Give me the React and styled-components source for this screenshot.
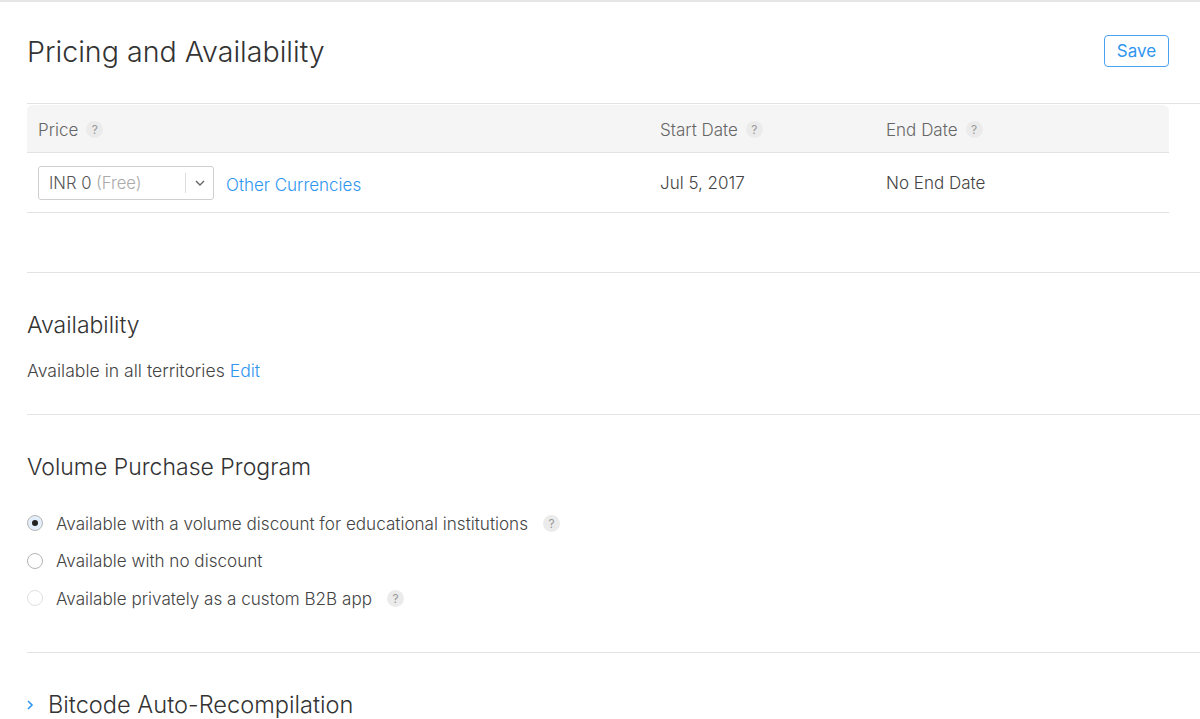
import styled, { createGlobalStyle } from "styled-components";

const GlobalStyle = createGlobalStyle`
  html, body {
    margin: 0;
    padding: 0;
    background: #fff;
    font-family: "Inter", "Liberation Sans", sans-serif;
    color: #444;
  }
`;

const Page = styled.div`
  border-top: 2px solid #e6e6e6;
  padding-left: 27px;
  overflow: hidden;
  height: 717px;
`;

const Header = styled.header`
  display: flex;
  align-items: center;
  justify-content: space-between;
  height: 101px;
  padding-right: 31px;
  box-sizing: border-box;
  padding-bottom: 2px;
`;

const Title = styled.h1`
  margin: 0;
  font-size: 28.6px;
  font-weight: 300;
  color: #333;
`;

const SaveButton = styled.button`
  font-family: inherit;
  width: 65px;
  height: 32px;
  border: 1px solid #4aa3f2;
  border-radius: 4px;
  background: #fff;
  color: #2f96f0;
  font-size: 17px;
  font-weight: 400;
  padding: 0;
  margin-top: -2px;
`;

const Section = styled.section`
  border-top: 1px solid #e3e3e3;
  padding-right: 31px;
  padding-top: ${(p) => p.$top || 0}px;
  padding-bottom: ${(p) => p.$bottom || 0}px;
`;

const Table = styled.div`
  margin-top: 1px;
`;

const TableRow = styled.div`
  display: grid;
  grid-template-columns: 622px 226px 1fr;
  align-items: center;
  height: ${(p) => (p.$head ? 47 : 59)}px;
  background: ${(p) => (p.$head ? "#f5f5f5" : "#fff")};
  border-bottom: 1px solid #e3e3e3;
  border-radius: ${(p) => (p.$head ? "6px 6px 0 0" : "0")};
`;

const Cell = styled.div`
  display: flex;
  align-items: center;
  gap: 8px;
  padding-left: 11px;
  padding-top: ${(p) => (p.$head ? 2 : 0)}px;
  font-size: 17px;
  color: ${(p) => (p.$head ? "#666" : "#444")};
  font-weight: 300;
`;

const Help = styled.span`
  display: inline-flex;
  align-items: center;
  justify-content: center;
  width: 17px;
  height: 17px;
  border-radius: 50%;
  background: #ebebeb;
  color: #999;
  font-size: 12px;
  font-weight: 400;
  margin-left: ${(p) => p.$gap || 0}px;
`;

const Select = styled.div`
  display: flex;
  align-items: center;
  width: 176px;
  height: 34px;
  box-sizing: border-box;
  border: 1px solid #cfcfcf;
  border-radius: 3px;
  font-size: 16.6px;
  font-weight: 300;
`;

const SelectValue = styled.span`
  flex: 1;
  padding-left: 10px;
  color: #555;
  white-space: nowrap;
`;

const Muted = styled.span`
  color: #aaa;
`;

const SelectArrow = styled.span`
  display: flex;
  align-items: center;
  justify-content: center;
  width: 27px;
  height: 20px;
  border-left: 1px solid #dcdcdc;
  color: #666;
`;

const Link = styled.a`
  color: #2f96f0;
  text-decoration: none;
  font-size: inherit;
  font-weight: 300;
  cursor: pointer;
`;

const CurrencyLink = styled(Link)`
  font-size: 17px;
  margin-left: 4px;
  margin-top: 4px;
`;

const Heading = styled.h2`
  margin: 0;
  font-size: ${(p) => p.$size || 23}px;
  font-weight: 300;
  color: #333;
  display: flex;
  align-items: center;
  gap: 14px;
`;

const Text = styled.p`
  margin: 0;
  margin-top: ${(p) => p.$top || 0}px;
  font-size: 17.6px;
  font-weight: 300;
  color: #444;
`;

const RadioList = styled.div`
  display: flex;
  flex-direction: column;
  gap: 15.5px;
  margin-top: 31px;
`;

const RadioRow = styled.label`
  display: flex;
  align-items: center;
  gap: 13px;
  font-size: 17.1px;
  font-weight: 300;
  color: #444;
  height: 22px;
`;

const RadioCircle = styled.span`
  width: 16px;
  height: 16px;
  border-radius: 50%;
  box-sizing: border-box;
  border: 1px solid ${(p) => (p.$disabled ? "#e0e0e0" : "#b5b5b5")};
  background: ${(p) => (p.$checked ? "#e3eefb" : "#fff")};
  display: flex;
  align-items: center;
  justify-content: center;
  &::after {
    content: "";
    width: 6px;
    height: 6px;
    border-radius: 50%;
    background: #222;
    display: ${(p) => (p.$checked ? "block" : "none")};
  }
`;

const Chevron = styled.span`
  display: flex;
  align-items: center;
  margin-left: -1px;
`;

const Radio = ({ checked, disabled, children, help }) => (
  <RadioRow>
    <RadioCircle $checked={checked} $disabled={disabled} />
    {children}
    {help && <Help $gap={2}>?</Help>}
  </RadioRow>
);

export default function App() {
  return (
    <>
      <GlobalStyle />
      <Page>
        <Header>
          <Title>Pricing and Availability</Title>
          <SaveButton>Save</SaveButton>
        </Header>

        <Section $bottom={59}>
          <Table>
            <TableRow $head>
              <Cell $head>
                Price <Help>?</Help>
              </Cell>
              <Cell $head>
                Start Date <Help>?</Help>
              </Cell>
              <Cell $head>
                End Date <Help>?</Help>
              </Cell>
            </TableRow>
            <TableRow>
              <Cell>
                <Select>
                  <SelectValue>
                    INR 0 <Muted>(Free)</Muted>
                  </SelectValue>
                  <SelectArrow>
                    <svg width="10" height="6" viewBox="0 0 10 6">
                      <path d="M1 1l4 4 4-4" fill="none" stroke="#666" strokeWidth="1.4" />
                    </svg>
                  </SelectArrow>
                </Select>
                <CurrencyLink>Other Currencies</CurrencyLink>
              </Cell>
              <Cell>Jul 5, 2017</Cell>
              <Cell>No End Date</Cell>
            </TableRow>
          </Table>
        </Section>

        <Section $top={38} $bottom={33}>
          <Heading>Availability</Heading>
          <Text $top={21}>
            Available in all territories <Link>Edit</Link>
          </Text>
        </Section>

        <Section $top={38} $bottom={43}>
          <Heading>Volume Purchase Program</Heading>
          <RadioList>
            <Radio checked help>
              Available with a volume discount for educational institutions
            </Radio>
            <Radio>Available with no discount</Radio>
            <Radio disabled help>
              Available privately as a custom B2B app
            </Radio>
          </RadioList>
        </Section>

        <Section $top={37}>
          <Heading $size={23.6}>
            <Chevron>
              <svg width="8" height="12" viewBox="0 0 8 12">
                <path d="M2 2l4 4-4 4" fill="none" stroke="#2f96f0" strokeWidth="1.6" />
              </svg>
            </Chevron>
            Bitcode Auto-Recompilation
          </Heading>
        </Section>
      </Page>
    </>
  );
}
